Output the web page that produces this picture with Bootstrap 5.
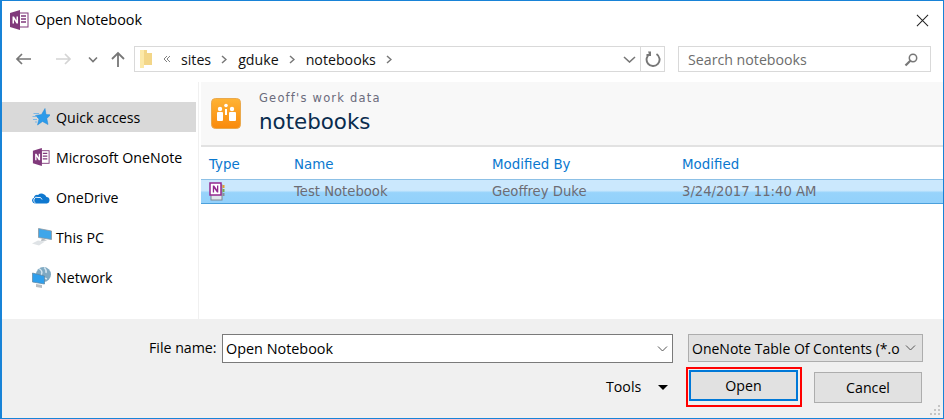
<!DOCTYPE html>
<html lang="en"><head><meta charset="utf-8"><title>Open Notebook</title>
<link href="https://cdn.jsdelivr.net/npm/bootstrap@5.3.0/dist/css/bootstrap.min.css" rel="stylesheet">
<style>
html,body{margin:0;height:419px;overflow:hidden;background:#fff}
body{font-family:"Open Sans","Liberation Sans",sans-serif;font-size:14.2px;color:#000}
.dlg{width:944px;height:419px;border:1px solid #1883d7;border-left-width:2px;display:flex;flex-direction:column;background:#fff}
.ttl{height:38px;padding-left:7px;gap:6px;flex:none}
.ttl-text{font-size:14.4px}
.xbtn{margin-left:auto;margin-right:14px;width:13px;height:13px}
.navrow{height:26px;margin-top:7px;flex:none;padding-left:13px}
.navic{flex:none;display:block}
.addr{margin-left:8px;width:531px;height:26px;border:1px solid #d9d9d9;padding-left:5px;flex:none}
.crumb{color:#111;padding-top:1px}
.sep{margin:0 11px 0 10px}
.refresh{width:24px;height:24px;border-left:1px solid #d9d9d9;justify-content:center}
.srch{margin-left:13px;width:253px;height:26px;border:1px solid #d9d9d9;padding:1px 12px 0 9px;color:#6d6d6d;justify-content:space-between;flex:none}
.mainarea{height:237px;margin-top:10px;flex:none}
.side{width:197px;border-right:1px solid #f0f0f0;flex:none;padding-top:20px}
.sitem{height:30px;margin-bottom:10px;padding-left:30px;gap:6px;width:194px}
.sitem span{padding-top:1px}
.sitem.on{background:#d9d9d9}
.panel{flex:1;margin-left:2px;min-width:0;font-family:"DejaVu Sans","Liberation Sans",sans-serif}
.phead{height:65px;background:#f8f8f8;border-bottom:2px solid #e2e2e2;padding-left:10px;gap:18px}
.psub{font-size:11.5px;letter-spacing:1.2px;color:#6b6b7c;line-height:14px}
.ptitle{font-size:21.4px;color:#0a2c4e;line-height:30px;padding-top:2px}
.cols,.rowsel{display:grid;grid-template-columns:85px 198px 190px 1fr;padding-left:8px}
.cols{height:32px;align-items:center;color:#0a78cf;font-size:13.4px;padding-top:4px}
.rowsel{height:25px;align-items:center;color:#6c6c74;background:linear-gradient(#cbe8fd 0,#cbe8fd 45%,#97d3fb 55%,#93d1fb 100%);border-top:1px solid #8cc0e6;border-bottom:1px solid #4ba0dc;font-size:13.2px}
.foot{flex:1;background:#f0f0f0;position:relative;padding-top:15px}
.frow1{padding-left:147px;height:29px}
.flabel{width:70px;white-space:nowrap}
.fname{margin-left:3px;width:451px;height:29px;background:#fff;border:1px solid #7a7a7a;padding:0 4px 0 3px;justify-content:space-between;flex:none;font-size:14.4px}
.ftype{margin-left:15px;width:235px;height:28px;background:#e1e1e1;border:1px solid #adadad;padding:0 6px 0 3px;justify-content:space-between;flex:none;white-space:nowrap;overflow:hidden;align-self:flex-start;font-size:14px}
.frow2{margin-top:4px;height:40px;padding-left:604px}
.tools{width:36px}
.tri{width:0;height:0;border-left:5px solid transparent;border-right:5px solid transparent;border-top:5px solid #000;margin-left:16px;margin-right:18px}
.redbox{border:2px solid #f00;padding:1px;width:116px;height:40px;flex:none;align-items:flex-start}
.dbtn{border-radius:0;background:#e1e1e1;font-size:14.2px;color:#000;padding:1px 0 0;font-family:inherit}
.dbtn:hover{background:#e1e1e1;color:#000}
.openb{width:109px;height:31px;border:2px solid #0078d7}
.cancelb{width:108px;height:31px;border:1px solid #adadad;margin-left:12px}
.grip{position:absolute;right:2px;bottom:2px}
</style></head>
<body>
<div class="dlg">
 <div class="ttl d-flex align-items-center">
  <svg width="20" height="20" viewBox="0 0 20 20" class="navic"><rect x="10" y="3" width="9" height="14" fill="#fff" stroke="#80397b"/><path d="M12 6h5M12 9h5M12 12h5" stroke="#80397b" stroke-width="1.5"/><path d="M1 3L11 0V20L1 17Z" fill="#80397b"/><path d="M3.5 13.500V6.500H5L7.500 10.500V6.500H9V13.500H7.500L5 9.500V13.500Z" fill="#fff"/></svg>
  <span class="ttl-text">Open Notebook</span>
  <svg class="xbtn" viewBox="0 0 14 14"><path d="M1 1L13 13M13 1L1 13" stroke="#222" stroke-width="1.1" fill="none"/></svg>
 </div>
 <div class="navrow d-flex align-items-center">
  <svg class="navic" width="17" height="12" viewBox="0 0 17 12"><path d="M16 6H2M7 1L2 6L7 11" fill="none" stroke="#777" stroke-width="1.7"/></svg>
  <svg class="navic" style="margin-left:23px" width="17" height="12" viewBox="0 0 17 12"><path d="M1 6H15M10 1L15 6L10 11" fill="none" stroke="#d4d4d4" stroke-width="1.7"/></svg>
  <svg class="navic" style="margin-left:16px" width="10" height="7" viewBox="0 0 10 7"><path d="M1 1.500L5 5.500L9 1.500" fill="none" stroke="#777" stroke-width="1.600"/></svg>
  <svg class="navic" style="margin-left:12px" width="16" height="17" viewBox="0 0 16 17"><path d="M8 16V2M2 8L8 2L14 8" fill="none" stroke="#777" stroke-width="1.800"/></svg>
  <div class="addr d-flex align-items-center">
   <svg class="navic" width="13" height="18" viewBox="0 0 13 18"><path d="M0 0H7V3L12 3V15H4V18H0Z" fill="#f3d688"/><path d="M0 0H4V18H0Z" fill="#fce9a8"/></svg>
   <svg class="navic" style="margin-left:10px" width="8" height="8" viewBox="0 0 8 8"><path d="M4 1L1 4L4 7M7 1L4 4L7 7" fill="none" stroke="#808080"/></svg>
   <span class="crumb" style="margin-left:10px">sites</span>
   <svg class="navic sep" width="6" height="9" viewBox="0 0 6 9"><path d="M1 1L5 4.500L1 8" fill="none" stroke="#777" stroke-width="1.500"/></svg>
   <span class="crumb">gduke</span>
   <svg class="navic sep" width="6" height="9" viewBox="0 0 6 9"><path d="M1 1L5 4.500L1 8" fill="none" stroke="#777" stroke-width="1.500"/></svg>
   <span class="crumb">notebooks</span>
   <svg class="navic sep" width="6" height="9" viewBox="0 0 6 9"><path d="M1 1L5 4.500L1 8" fill="none" stroke="#777" stroke-width="1.500"/></svg>
   <svg class="navic" style="margin-left:auto;margin-right:4px" width="13" height="7" viewBox="0 0 13 7"><path d="M1 1L6.500 6L12 1" fill="none" stroke="#777" stroke-width="1.600"/></svg>
   <div class="refresh d-flex align-items-center">
    <svg width="16" height="16" viewBox="0 0 16 16"><path d="M5 2.800A6.500 6.500 0 1 0 11.500 3" fill="none" stroke="#777" stroke-width="1.900"/><path d="M3 1H6V5.500H1.500V3.500H4Z" fill="#777" transform="translate(0 -0.500)"/></svg>
   </div>
  </div>
  <div class="srch d-flex align-items-center"><span>Search notebooks</span>
   <svg class="navic" width="14" height="14" viewBox="0 0 14 14"><circle cx="9" cy="5" r="3.700" fill="none" stroke="#777" stroke-width="1.500"/><path d="M6.300 7.700L1.500 12.500" stroke="#777" stroke-width="2.200"/></svg>
  </div>
 </div>
 <div class="mainarea d-flex">
  <div class="side">
   <div class="sitem on d-flex align-items-center">
    <svg class="navic" width="18" height="18" viewBox="0 0 18 18"><path d="M13 0.500L14 6.500L18.500 6.800L14.800 10.500L16 16.500L10.500 13.500L5.500 17L7 11L3.500 7.500L9.500 6.500Z" fill="#2b9bea" stroke="#1f86d6" stroke-width="0.500"/><path d="M1.500 5.500H7M0.500 8.500H4.500M1 11.500H5M3 14H5" stroke="#7ab7e6"/></svg>
    <span>Quick access</span></div>
   <div class="sitem d-flex align-items-center">
    <svg class="navic" width="18" height="20" viewBox="0 0 20 20"><rect x="10" y="3" width="9" height="14" fill="#fff" stroke="#80397b"/><path d="M12 6h5M12 9h5M12 12h5" stroke="#80397b" stroke-width="1.500"/><path d="M1 3L11 0V20L1 17Z" fill="#80397b"/><path d="M3.500 13.500V6.500H5L7.500 10.500V6.500H9V13.500H7.500L5 9.500V13.500Z" fill="#fff"/></svg>
    <span>Microsoft OneNote</span></div>
   <div class="sitem d-flex align-items-center">
    <svg class="navic" width="18" height="13" viewBox="0 0 18 13"><path d="M3 12.500A3 3 0 0 1 2 6.700A3 3 0 0 1 6 4A5.200 5.200 0 0 1 14.500 6A3.300 3.300 0 0 1 15 12.500Z" fill="#0f78d0"/><path d="M3.500 12A3 3 0 0 1 6 6.500Q9 5.500 10 8.500" fill="none" stroke="#fff" stroke-width="0.900"/></svg>
    <span>OneDrive</span></div>
   <div class="sitem d-flex align-items-center">
    <svg class="navic" width="20" height="18" style="margin-right:-2px" viewBox="0 0 20 18"><path d="M6.500 0.500L19.500 3V11.500L6.500 9.500Z" fill="#3fa6ea" stroke="#8b979f" stroke-width="0.800"/><path d="M12 11L15 12.500L9 13L10 10Z" fill="#b4babf"/><path d="M0 15.500L6 12.500L13 13.500L7 17.500Z" fill="#dfe3e6"/></svg>
    <span>This PC</span></div>
   <div class="sitem d-flex align-items-center">
    <svg class="navic" width="19" height="23" style="margin-right:-1px" viewBox="0 0 19 23"><circle cx="11.500" cy="8.500" r="7.500" fill="#7fa9c2"/><path d="M7 2.500Q11 5 9.500 8T15 13M12 1.500Q15 4 14 7" fill="none" stroke="#d2e4ef" stroke-width="1.400"/><path d="M0.500 7L12.500 10V18L0.500 16Z" fill="#2f9fec" stroke="#5d84a0" stroke-width="0.700"/><path d="M4 18L10 19V22L4 21Z" fill="#b8bec3"/></svg>
    <span>Network</span></div>
  </div>
  <div class="panel">
   <div class="phead d-flex align-items-center">
    <svg class="navic" width="30" height="31" viewBox="0 0 30 31"><defs><linearGradient id="og" x1="0" y1="0" x2="0" y2="1"><stop offset="0" stop-color="#ffb334"/><stop offset="1" stop-color="#f98a0c"/></linearGradient></defs><rect x="0.500" y="0.500" width="29" height="30" rx="4" fill="url(#og)" stroke="#e9a94e"/><circle cx="9" cy="11" r="2.200" fill="#fff"/><circle cx="15" cy="7.500" r="1.800" fill="#fff"/><circle cx="21" cy="11" r="2.200" fill="#fff"/><rect x="6" y="14" width="6" height="9" rx="1" fill="#fff"/><rect x="18" y="14" width="7" height="9" rx="1" fill="#fff"/><rect x="14" y="11" width="2" height="6" fill="#fff"/></svg>
    <div><div class="psub">Geoff's work data</div><div class="ptitle">notebooks</div></div>
   </div>
   <div class="cols"><span>Type</span><span>Name</span><span>Modified By</span><span>Modified</span></div>
   <div class="rowsel">
    <span class="d-flex"><svg class="navic" width="17" height="19" viewBox="0 0 17 19"><rect x="2" y="3" width="11" height="15" fill="#dfe6ec" stroke="#7f8794"/><rect x="1" y="1" width="11" height="12" fill="#fff" stroke="#93278f" stroke-width="1.500"/><path d="M3.800 10.500V3.500H5.200L8 7.500V3.500H9.300V10.500H8L5.100 6.500V10.500Z" fill="#93278f"/><path d="M14.500 3V6" stroke="#e0a030" stroke-width="2"/><path d="M14.500 7V10" stroke="#7aa84f" stroke-width="2"/><path d="M14.500 11V14" stroke="#8a8f96" stroke-width="2"/></svg></span>
    <span>Test Notebook</span><span>Geoffrey Duke</span><span>3/24/2017 11:40 AM</span>
   </div>
  </div>
 </div>
 <div class="foot">
  <div class="frow1 d-flex align-items-start">
   <span class="flabel lh-lg">File name:</span>
   <div class="fname d-flex align-items-center"><span>Open Notebook</span>
    <svg class="navic" width="11" height="6" viewBox="0 0 11 6"><path d="M1 0.500L5.500 5L10 0.500" fill="none" stroke="#555"/></svg></div>
   <div class="ftype d-flex align-items-center"><span>OneNote Table Of Contents (*.o</span>
    <svg class="navic" width="11" height="6" viewBox="0 0 11 6"><path d="M1 0.500L5.500 5L10 0.500" fill="none" stroke="#555"/></svg></div>
  </div>
  <div class="frow2 d-flex align-items-center">
   <span class="tools">Tools</span><span class="tri"></span>
   <div class="redbox d-flex"><button class="btn dbtn openb" type="button">Open</button></div>
   <button class="btn dbtn cancelb" type="button">Cancel</button>
  </div>
  <svg class="grip" width="11" height="11" viewBox="0 0 11 11"><path d="M8 0h2v2H8zM4 4h2v2H4zM8 4h2v2H8zM0 8h2v2H0zM4 8h2v2H4zM8 8h2v2H8z" fill="#c4c4c4"/></svg>
 </div>
</div>
<script src="https://cdn.jsdelivr.net/npm/bootstrap@5.3.0/dist/js/bootstrap.bundle.min.js"></script>
</body></html>
